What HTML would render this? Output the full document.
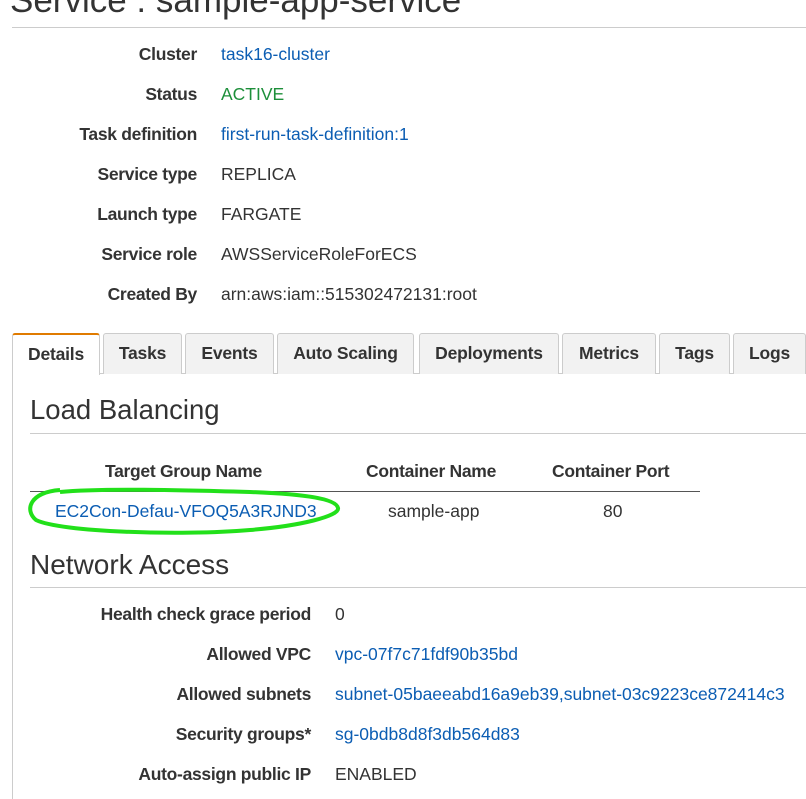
<!DOCTYPE html>
<html><head><meta charset="utf-8"><style>
*{margin:0;padding:0;box-sizing:border-box}
body{width:806px;height:799px;overflow:hidden;background:#fff;font-family:"Liberation Sans",Arial,sans-serif;font-size:17.5px;color:#333;position:relative;letter-spacing:0}
.a{position:absolute;white-space:nowrap;line-height:20px}
.l{font-weight:bold;text-align:right;color:#333;letter-spacing:-0.3px}
.b{color:#0b5db3}
.h{position:absolute;height:1px;background:#ccc}
.tab{position:absolute;top:333px;height:41px;background:#f2f2f2;border:1px solid #ccc;border-bottom:none;font-weight:bold;text-align:center;line-height:38px;color:#333;border-radius:3px 3px 0 0;letter-spacing:-0.2px}
</style></head><body>
<div class="a" style="left:10px;top:-18px;font-size:35px;line-height:38px;color:#333">Service : sample-app-service</div>
<div class="h" style="left:12px;top:27px;width:794px"></div>

<div class="a l" style="right:609px;top:44px">Cluster</div><div class="a b" style="left:221px;top:44px">task16-cluster</div>
<div class="a l" style="right:609px;top:84px">Status</div><div class="a" style="left:221px;top:84px;color:#1d8f3a">ACTIVE</div>
<div class="a l" style="right:609px;top:124px">Task definition</div><div class="a b" style="left:221px;top:124px">first-run-task-definition:1</div>
<div class="a l" style="right:609px;top:164px">Service type</div><div class="a" style="left:221px;top:164px">REPLICA</div>
<div class="a l" style="right:609px;top:204px">Launch type</div><div class="a" style="left:221px;top:204px">FARGATE</div>
<div class="a l" style="right:609px;top:244px">Service role</div><div class="a" style="left:221px;top:244px">AWSServiceRoleForECS</div>
<div class="a l" style="right:609px;top:284px">Created By</div><div class="a" style="left:221px;top:284px">arn:aws:iam::515302472131:root</div>

<div class="h" style="left:12px;top:373px;width:794px"></div>
<div style="position:absolute;left:12px;top:373px;width:1px;height:426px;background:#ccc"></div>
<div class="tab" style="left:12px;width:88px;background:#fff;border-top:2px solid #e07b00;height:42px">Details</div>
<div class="tab" style="left:103px;width:79px">Tasks</div>
<div class="tab" style="left:185px;width:89px">Events</div>
<div class="tab" style="left:277px;width:137px">Auto Scaling</div>
<div class="tab" style="left:419px;width:140px">Deployments</div>
<div class="tab" style="left:562px;width:94px">Metrics</div>
<div class="tab" style="left:659px;width:71px">Tags</div>
<div class="tab" style="left:733px;width:73px">Logs</div>

<div class="a" style="left:30px;top:394px;font-size:27.5px;line-height:32px">Load Balancing</div>
<div class="h" style="left:30px;top:433px;width:776px"></div>
<div class="a l" style="left:105px;top:461px">Target Group Name</div>
<div class="a l" style="left:366px;top:461px">Container Name</div>
<div class="a l" style="left:552px;top:461px">Container Port</div>
<div class="h" style="left:30px;top:491px;width:670px;background:#555"></div>
<div class="a b" style="left:55px;top:501px">EC2Con-Defau-VFOQ5A3RJND3</div>
<div class="a" style="left:388px;top:501px">sample-app</div>
<div class="a" style="left:603px;top:501px">80</div>
<svg style="position:absolute;left:0;top:480px" width="360" height="60"><path d="M60 10 C30 12 24 30 36 40 C60 52 180 56 250 50 C300 46 340 36 338 28 C336 18 300 14 250 12 C180 10 100 8 60 12" fill="none" stroke="#22e01a" stroke-width="4"/></svg>

<div class="a" style="left:30px;top:549px;font-size:28px;line-height:32px">Network Access</div>
<div class="h" style="left:30px;top:587px;width:776px"></div>
<div class="a l" style="right:495px;top:604px">Health check grace period</div><div class="a" style="left:335px;top:604px">0</div>
<div class="a l" style="right:495px;top:644px">Allowed VPC</div><div class="a b" style="left:335px;top:644px">vpc-07f7c71fdf90b35bd</div>
<div class="a l" style="right:495px;top:684px">Allowed subnets</div><div class="a b" style="left:335px;top:684px">subnet-05baeeabd16a9eb39,subnet-03c9223ce872414c3</div>
<div class="a l" style="right:495px;top:724px">Security groups*</div><div class="a b" style="left:335px;top:724px">sg-0bdb8d8f3db564d83</div>
<div class="a l" style="right:495px;top:764px">Auto-assign public IP</div><div class="a" style="left:335px;top:764px">ENABLED</div>
</body></html>
